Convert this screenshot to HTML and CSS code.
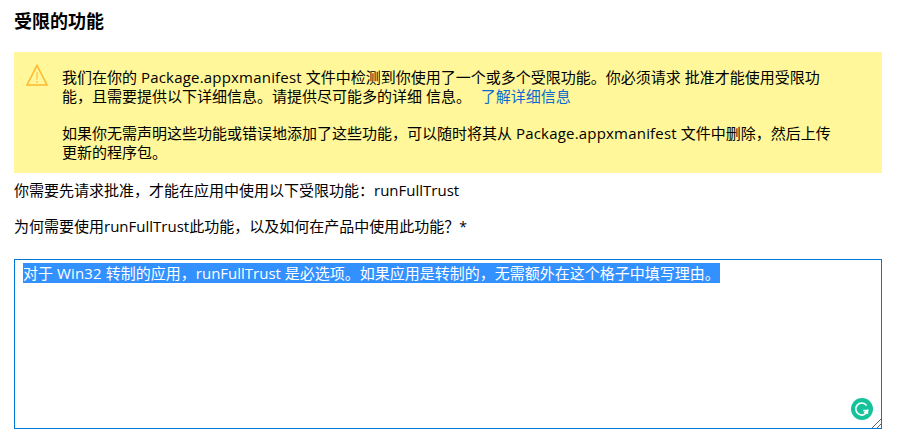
FILE: index.html
```html
<!DOCTYPE html>
<html lang="zh-CN">
<head>
    <meta charset="UTF-8">
    <title>受限的功能</title>
    <link rel="stylesheet" href="styles.css">
</head>
<body>
    <div class="page">
        <h2 class="title">受限的功能</h2>
        <div class="notice">
            <svg class="notice-icon" width="24" height="24" viewBox="0 0 24 24">
                <path d="M11 2.5 L21 22 H1 Z" fill="none" stroke="#ffb92e" stroke-width="1.6" stroke-linejoin="miter"/>
                <path d="M11 9 V16.5 M11 18 V20" fill="none" stroke="#ffc95e" stroke-width="1.5"/>
            </svg>
            <div class="notice-text">
                <p>我们在你的 <span class="wide">Package.appxmanifest</span> 文件中检测到你使用了一个或多个受限功能。你必须请求 批准才能使用受限功能，且需要提供以下详细信息。请提供尽可能多的详细 信息。 <a href="#" class="learn">了解详细信息</a></p>
                <p>如果你无需声明这些功能或错误地添加了这些功能，可以随时将其从 <span class="wide">Package.appxmanifest</span> 文件中删除，然后上传更新的程序包。</p>
            </div>
        </div>
        <p class="line first">你需要先请求批准，才能在应用中使用以下受限功能：runFullTrust</p>
        <p class="line second">为何需要使用runFullTrust此功能，以及如何在产品中使用此功能？<span class="required">*</span></p>
        <div class="reason">
            <span class="selected">对于 <span class="wide">Win32</span> 转制的应用，runFullTrust 是必选项。如果应用是转制的，无需额外在这个格子中填写理由。</span>
            <svg class="grammarly" width="22" height="22" viewBox="0 0 22 22">
                <circle cx="11" cy="11" r="11" fill="#15c39a"/>
                <path d="M15.6 7.4 A6 6 0 1 0 16.6 12.5 H12.2" fill="none" stroke="#fff" stroke-width="1.7"/>
                <path d="M13 14.8 L16.4 12.5 L16.4 16" fill="none" stroke="#fff" stroke-width="1.5"/>
            </svg>
            <svg class="grip" width="9" height="9" viewBox="0 0 9 9">
                <path d="M0 9 L9 0 M5 9 L9 5" stroke="#666" stroke-width="1"/>
            </svg>
        </div>
    </div>
</body>
</html>
```

FILE: styles.css
```css
body {
    margin: 0;
    padding: 0;
    background-color: #fff;
    color: #000;
    font-family: "Open Sans", "Noto Sans CJK SC", sans-serif;
    font-size: 15px;
    line-height: 19px;
}

.page {
    padding: 9px 17px 0 14px;
}

.title {
    margin: 0 0 19px 0;
    font-size: 18px;
    line-height: 24px;
    font-weight: 700;
}

.notice {
    display: flex;
    height: 121px;
    box-sizing: border-box;
    padding: 16px 48px 0 12px;
    background-color: #fff799;
}

.notice-icon {
    flex: none;
    margin-top: -5px;
    margin-right: 12px;
}

.notice-text p {
    margin: 0 0 18px 0;
}

.wide {
    letter-spacing: 0.2px;
}

.learn {
    margin-left: 6px;
    color: #0a6ad0;
    text-decoration: none;
}

.line {
    margin: 0;
}

.first {
    margin-top: 8px;
}

.second {
    margin-top: 17px;
}

.required {
    font-size: 14px;
}

.reason {
    position: relative;
    height: 170px;
    margin-top: 23px;
    padding: 4px 8px;
    box-sizing: border-box;
    border: 1px solid #0078d7;
}

.selected {
    background-color: #3390ff;
    color: #fff;
}

.grammarly {
    position: absolute;
    right: 8px;
    bottom: 8px;
}

.grip {
    position: absolute;
    right: 0;
    bottom: 0;
}
```
